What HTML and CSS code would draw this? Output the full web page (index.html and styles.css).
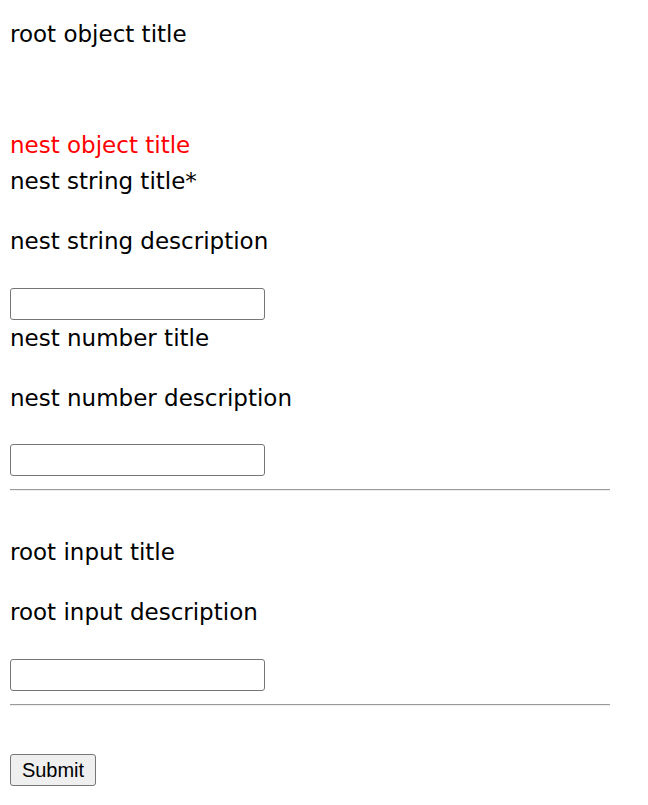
FILE: index.html
```html
<!DOCTYPE html>
<html lang="en">
<head>
    <meta charset="UTF-8">
    <meta name="viewport" content="width=device-width, initial-scale=1.0">
    <title>Schema Form</title>
    <link rel="stylesheet" href="styles.css">
</head>
<body>
    <form class="schema-form">
        <div class="object-title">root object title</div>

        <fieldset class="nest-object">
            <div class="object-title nest">nest object title</div>

            <div class="field">
                <label class="field-title" for="nestString">nest string title*</label>
                <p class="field-desc">nest string description</p>
                <input type="text" id="nestString" title="nest string" required>
            </div>

            <div class="field">
                <label class="field-title" for="nestNumber">nest number title</label>
                <p class="field-desc">nest number description</p>
                <input type="number" id="nestNumber" title="nest number">
            </div>
        </fieldset>

        <hr>

        <div class="field root">
            <label class="field-title" for="rootInput">root input title</label>
            <p class="field-desc">root input description</p>
            <input type="text" id="rootInput" title="root input">
        </div>

        <hr>

        <button type="submit" class="submit-button">Submit</button>
    </form>
</body>
</html>
```

FILE: styles.css
```css
body {
    margin: 0;
    padding: 16px 10px;
    font-family: "DejaVu Sans", "Noto Sans", sans-serif;
    font-size: 23px;
    line-height: 36px;
    color: #000;
    background: #fff;
}

.schema-form {
    inline-size: 600px;
}

.object-title {
    block-size: 36px;
}

.object-title.nest {
    color: red;
}

.nest-object {
    border: none;
    margin: 75px 0 0;
    padding: 0;
}

.field {
    display: flex;
    flex-direction: column;
    align-items: flex-start;
}

.field-title {
    display: block;
}

.field-desc {
    margin: 24px 0 28.5px;
}

.field input {
    inline-size: 255px;
    block-size: 32px;
    box-sizing: border-box;
    margin: 0;
    border: 1px solid #767676;
    border-radius: 3px;
    padding: 1px 2px;
    font-size: 16px;
    -moz-appearance: textfield;
}

.field input::-webkit-inner-spin-button,
.field input::-webkit-outer-spin-button {
    -webkit-appearance: none;
    margin: 0;
}

hr {
    margin: 13px 0 0;
    border: none;
    border-top: 1px solid #9a9a9a;
    border-bottom: 1px solid #eee;
}

.field.root {
    margin-block-start: 43px;
}

.submit-button {
    margin-block-start: 48px;
    inline-size: 86px;
    block-size: 32px;
    padding: 0;
    font-family: "Liberation Sans", Arial, sans-serif;
    font-size: 20px;
    line-height: 1;
    color: #000;
    background: #efefef;
    border: 1px solid #767676;
    border-radius: 3px;
}
```
